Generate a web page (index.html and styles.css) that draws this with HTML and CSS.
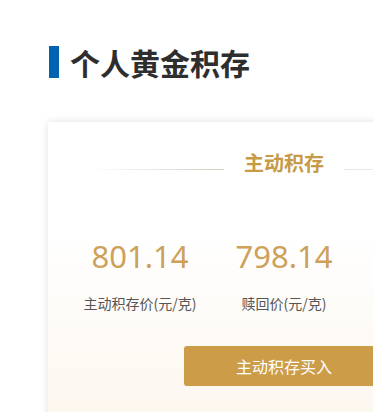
FILE: index.html
```html
<!DOCTYPE html>
<html lang="zh-CN">
<head>
  <meta charset="UTF-8">
  <title>个人黄金积存</title>
  <link rel="stylesheet" href="styles.css">
</head>
<body>
  <div class="page">
    <h1 class="title">个人黄金积存</h1>

    <div class="card">
      <div class="card-head">
        <span class="line line-left"></span>
        <h2>主动积存</h2>
        <span class="line line-right"></span>
      </div>

      <div class="prices">
        <div class="price">
          <p class="price-value">801.14</p>
          <p class="price-label">主动积存价(元/克)</p>
        </div>
        <div class="price">
          <p class="price-value">798.14</p>
          <p class="price-label">赎回价(元/克)</p>
        </div>
        <div class="price"></div>
      </div>

      <div class="actions">
        <button class="buy">主动积存买入</button>
      </div>
    </div>
  </div>
</body>
</html>
```

FILE: styles.css
```css
body {
  margin: 0;
  padding: 0;
  background-color: #fff;
  font-family: "Noto Sans CJK SC", "Noto Sans", sans-serif;
  overflow: hidden;
}

.page {
  padding: 46px 0 0 48px;
}

.title {
  margin: 0 0 0 1px;
  padding-left: 11px;
  border-left: 10px solid #0062b0;
  font-size: 30px;
  line-height: 32px;
  font-weight: bold;
  color: #2e2e2e;
}

.card {
  width: 472px;
  margin-top: 44px;
  padding: 27px 20px 50px;
  box-sizing: border-box;
  background: linear-gradient(to bottom, #fff 35%, #fcf6ed 100%);
  box-shadow: 0 0 8px rgba(0, 0, 0, 0.12);
}

.card-head {
  display: flex;
  align-items: center;
  gap: 20px;
  margin: 0 22px;
}

.card-head h2 {
  margin: 0;
  font-size: 20px;
  line-height: 28px;
  font-weight: bold;
  color: #c79a45;
}

.line {
  flex: 1;
  height: 1px;
  margin-top: 12px;
}

.line-left {
  background: linear-gradient(to right, rgba(210, 205, 195, 0), #d2cdc3);
}

.line-right {
  background: linear-gradient(to left, rgba(210, 205, 195, 0), #e8e4dc);
}

.prices {
  display: grid;
  grid-template-columns: repeat(3, 144px);
  margin-top: 59px;
}

.price {
  text-align: center;
}

.price-value {
  margin: 0;
  font-family: "Noto Sans", sans-serif;
  font-size: 31px;
  line-height: 40px;
  color: #cda159;
}

.price-label {
  margin: 17px 0 0;
  font-size: 14px;
  line-height: 20px;
  color: #555;
}

.actions {
  display: flex;
  justify-content: center;
  margin-top: 33px;
}

.buy {
  width: 200px;
  height: 40px;
  border: none;
  border-radius: 3px;
  background-color: #cc9c48;
  color: #fff;
  font-family: "Noto Sans CJK SC", sans-serif;
  font-size: 16px;
  cursor: pointer;
}
```
